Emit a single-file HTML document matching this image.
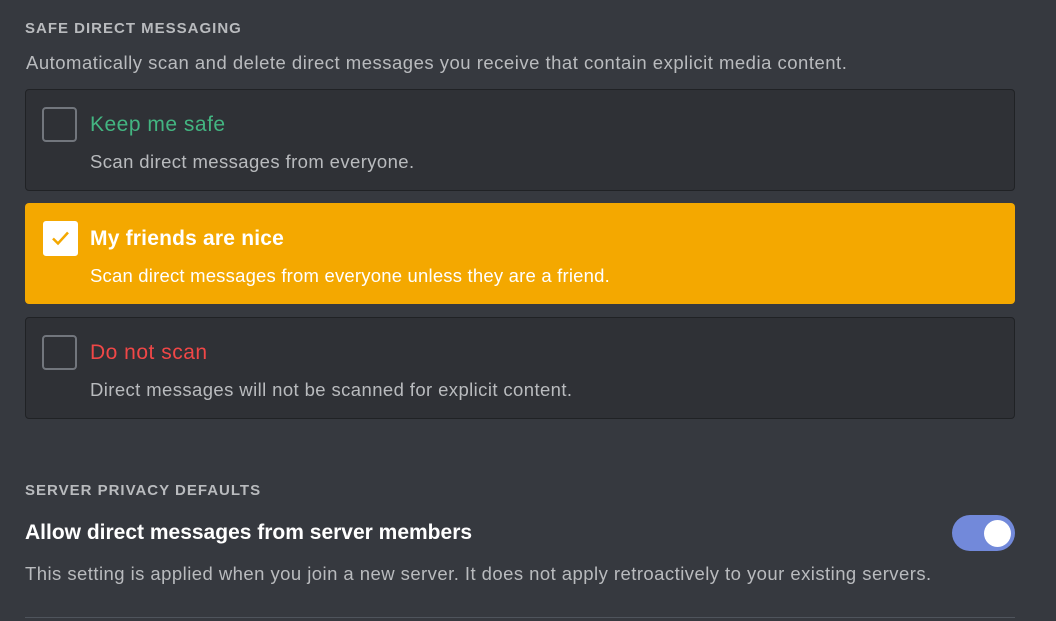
<!DOCTYPE html>
<html><head><style>
body{margin:0;width:1056px;height:621px;background:#36393f;font-family:"Liberation Sans",sans-serif;overflow:hidden;position:relative}
.a{position:absolute;white-space:nowrap}
.h{font-size:15px;font-weight:bold;color:#b9bbbe;letter-spacing:1px}
.d{font-size:18.5px;color:#b9bbbe;letter-spacing:0.5px}
.card{position:absolute;left:25px;width:988px;height:100px;border:1px solid #202225;border-radius:4px;background:#2f3136}
.cb{position:absolute;left:16px;top:17px;width:31px;height:31px;border:2px solid #72767d;border-radius:4px}
.t{position:absolute;left:64px;top:23px;font-size:21px;letter-spacing:0.5px;white-space:nowrap}
.s{position:absolute;left:64px;top:61px;font-size:18.5px;letter-spacing:0.4px;color:#b9bbbe;white-space:nowrap}
</style></head><body>
<div class="a h" style="left:25px;top:20px">SAFE DIRECT MESSAGING</div>
<div class="a d" style="left:26px;top:52px">Automatically scan and delete direct messages you receive that contain explicit media content.</div>

<div class="card" style="top:89px"><div class="cb"></div><div class="t" style="color:#43b581">Keep me safe</div><div class="s">Scan direct messages from everyone.</div></div>

<div class="card" style="top:203px;background:#f4a800;height:101px;width:990px;border:none">
<div class="cb" style="left:18px;top:18px;background:#fff;border-color:#fff;width:31px;height:31px;border-radius:3px">
<svg width="31" height="31" viewBox="0 0 31 31" style="position:absolute;left:0;top:0"><path d="M8 15.5l5 5 10-11" fill="none" stroke="#f4a800" stroke-width="2.5"/></svg></div>
<div class="t" style="color:#fff;left:65px;top:24px;font-weight:bold;letter-spacing:0.2px">My friends are nice</div><div class="s" style="color:#fff;left:65px;top:62px;letter-spacing:0.2px">Scan direct messages from everyone unless they are a friend.</div></div>

<div class="card" style="top:317px"><div class="cb"></div><div class="t" style="color:#f04747">Do not scan</div><div class="s">Direct messages will not be scanned for explicit content.</div></div>

<div class="a h" style="left:25px;top:482px">SERVER PRIVACY DEFAULTS</div>
<div class="a" style="left:25px;top:521px;font-size:21px;color:#fff;font-weight:bold">Allow direct messages from server members</div>
<div class="a d" style="left:25px;top:563px;letter-spacing:0.45px">This setting is applied when you join a new server. It does not apply retroactively to your existing servers.</div>
<div class="a" style="left:952px;top:515px;width:63px;height:36px;border-radius:18px;background:#7289da"></div>
<div class="a" style="left:984px;top:520px;width:27px;height:27px;border-radius:50%;background:#fff"></div>
<div class="a" style="left:25px;top:617px;width:990px;height:1px;background:#4f545c"></div>
</body></html>
